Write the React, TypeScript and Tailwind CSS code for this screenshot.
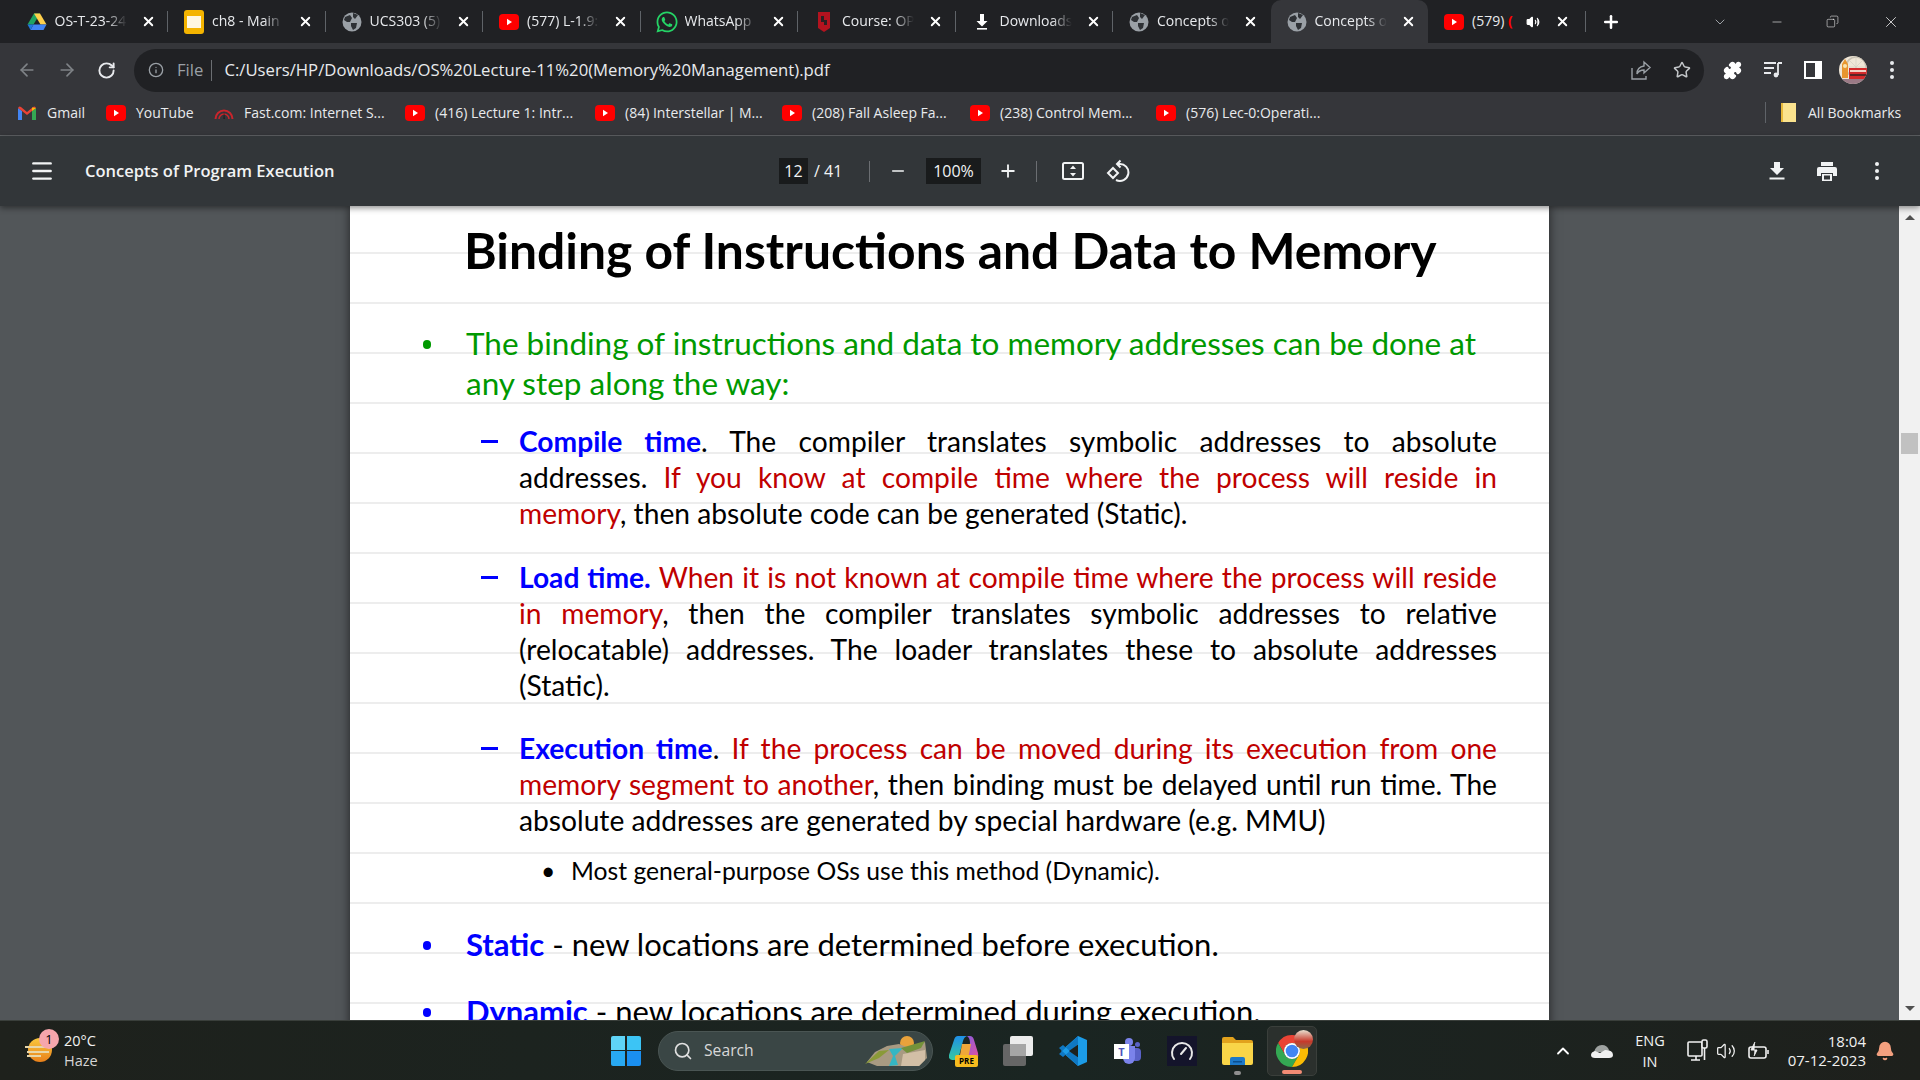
import React from 'react';
import { ArrowLeft, ArrowRight, RotateCw, Info, Star, Puzzle, Menu, Minus, Plus, X, ChevronDown, ChevronUp, Search, Volume2, Bell, Copy } from 'lucide-react';
import { FaWhatsapp } from 'react-icons/fa';

const ui = 'font-["Open_Sans",sans-serif]';

const YtIcon = ({ size = 20 }: { size?: number }) => (
  <svg width={size} height={size} viewBox="0 0 20 20" className="shrink-0">
    <rect x="0" y="2" width="20" height="16" rx="4" fill="#ff0000" />
    <path d="M8 6.8 L13 10 L8 13.2 Z" fill="#fff" />
  </svg>
);

const GlobeIcon = () => (
  <svg width="20" height="20" viewBox="0 0 20 20" className="shrink-0">
    <circle cx="10" cy="10" r="9.5" fill="#9aa0a6" />
    <path d="M3 5 L8 3 L10 6 L8 10 L5 10 L2 8 Z M11 1 L16 3 L13 7 L11 5 Z M9 11 L15 11 L14 16 L11 18 L9 14 Z" fill="#2e3135" />
  </svg>
);

const DriveIcon = () => (
  <svg width="20" height="20" viewBox="0 0 20 20" className="shrink-0">
    <path d="M7 1.5 L13 1.5 L6.5 12.5 L0.5 12.5 Z" fill="#1fa463" />
    <path d="M13 1.5 L19.5 12.5 L13.5 12.5 L7 1.5 Z" fill="#ffd04b" />
    <path d="M6.5 12.5 L19.5 12.5 L16.5 18 L3.5 18 Z" fill="#4285f4" />
    <path d="M0.5 12.5 L6.5 12.5 L3.5 18 Z" fill="#1f7ae0" />
  </svg>
);

const SlidesIcon = () => (
  <div className="w-[20px] h-[24px] shrink-0 bg-[#f4b400] rounded-[3px] flex items-center justify-center">
    <div className="w-[14px] h-[12px] bg-[#fff7e0]" />
  </div>
);

const CourseIcon = () => (
  <svg width="16" height="22" viewBox="0 0 16 22" className="shrink-0">
    <path d="M2 1 H14 V17 L8 21 L2 17 Z" fill="#b3131f" />
    <path d="M5 5 H8 V9 H11 V14 H8 V11 H5 Z" fill="#2b2022" />
  </svg>
);

const DownloadGlyph = () => (
  <svg width="20" height="20" viewBox="0 0 20 20" className="shrink-0">
    <path d="M8 2 H12 V9 H15.5 L10 14.5 L4.5 9 H8 Z" fill="#fff" />
    <rect x="5" y="16" width="10" height="1.6" fill="#fff" />
  </svg>
);

const Tab = ({
  icon,
  label,
  active,
  audio,
  sep = true,
}: {
  icon: React.ReactNode;
  label: React.ReactNode;
  active?: boolean;
  audio?: boolean;
  sep?: boolean;
}) => (
  <div className={`relative w-[157.5px] h-[43px] flex items-center pl-[15px] shrink-0 ${active ? 'bg-[#35363a] rounded-t-[10px]' : ''}`}>
    <div className="w-[22px] shrink-0 flex justify-center">{icon}</div>
    <div className={`ml-[7px] pb-[2px] overflow-hidden whitespace-nowrap text-[14px] text-[#e8eaed] ${audio ? 'w-[48px]' : 'w-[72px] [mask-image:linear-gradient(to_right,black_72%,transparent)]'}`}>
      {label}
    </div>
    {audio && <Volume2 size={14} fill="#fff" className="ml-[6px] text-white shrink-0" />}
    <X size={15} strokeWidth={3} className={`text-white shrink-0 ${audio ? 'ml-[15px]' : 'ml-[14px]'}`} />
    {sep && <div className="absolute right-0 top-[11px] h-[21px] w-px bg-[#5f6368]" />}
  </div>
);

const GmailIcon = () => (
  <svg width="18" height="14" viewBox="0 0 18 14" className="shrink-0">
    <path d="M0 2 L0 14 L4 14 L4 5 Z" fill="#4285f4" />
    <path d="M18 2 L18 14 L14 14 L14 5 Z" fill="#34a853" />
    <path d="M0 2 Q1 -0.5 3 1 L9 6 L15 1 Q17 -0.5 18 2 L14 5 L9 9 L4 5 Z" fill="#ea4335" />
    <path d="M14 1.5 L18 2 L14 5 Z" fill="#fbbc04" />
  </svg>
);

const FastIcon = () => (
  <svg width="20" height="16" viewBox="0 0 20 16" className="shrink-0">
    <path d="M1.5 14 A8.5 8.5 0 0 1 18.5 14" fill="none" stroke="#c9252c" strokeWidth="2" />
    <path d="M5 14 A5 5 0 0 1 15 14" fill="none" stroke="#c9252c" strokeWidth="1.5" />
    <path d="M9.6 14 L10 6 L10.6 14 Z" fill="#111" />
  </svg>
);

const Bookmark = ({ icon, label, width }: { icon: React.ReactNode; label: string; width: number }) => (
  <div className="flex items-center shrink-0 h-full" style={{ width }}>
    <div className="w-[20px] flex justify-center shrink-0">{icon}</div>
    <span className="ml-[10px] text-[14px] text-[#e8eaed] whitespace-nowrap">{label}</span>
  </div>
);

const ChromeLogo = () => (
  <svg width="32" height="32" viewBox="0 0 32 32">
    <path d="M16 8 H29.86 A16 16 0 0 0 2.14 8 L9.07 20 A8 8 0 0 1 16 8 Z" fill="#ea4335" />
    <path d="M9.07 20 L2.14 8 A16 16 0 0 0 16 32 L22.93 20 A8 8 0 0 1 9.07 20 Z" fill="#34a853" />
    <path d="M22.93 20 L16 32 A16 16 0 0 0 29.86 8 H16 A8 8 0 0 1 22.93 20 Z" fill="#fbbc04" />
    <circle cx="16" cy="16" r="8" fill="#fff" />
    <circle cx="16" cy="16" r="6.3" fill="#4285f4" />
  </svg>
);

const Avatar = () => (
  <svg width="28" height="28" viewBox="0 0 28 28" className="shrink-0">
    <clipPath id="av"><circle cx="14" cy="14" r="14" /></clipPath>
    <g clipPath="url(#av)">
      <rect width="28" height="28" fill="#efe6d6" />
      <circle cx="17" cy="11" r="10" fill="none" stroke="#c9c2b4" strokeWidth="1.6" />
      <path d="M17 1 V21 M7 11 H27 M10 4 L24 18 M24 4 L10 18" stroke="#d6cfc0" strokeWidth="0.7" />
      <path d="M3 8 L6 3 L9 8 V22 H3 Z" fill="#e8962f" />
      <circle cx="6" cy="10" r="2" fill="#f7e3b0" />
      <rect x="10" y="12" width="18" height="11" fill="#d42a2a" />
      <rect x="11" y="14" width="16" height="2" fill="#f3d2c4" />
      <rect x="11" y="18" width="16" height="2" fill="#5a2525" />
      <rect x="0" y="23" width="28" height="5" fill="#9a7a86" />
    </g>
  </svg>
);

const Sep = () => <div className="w-px h-[21px] bg-[#6b6e72] shrink-0" />;

const Blue = ({ children }: { children: React.ReactNode }) => <span className="text-[#0000ff] font-bold">{children}</span>;
const Red = ({ children }: { children: React.ReactNode }) => <span className="text-[#c00000]">{children}</span>;

// one justified line of the slide, stretched out to the right margin
const J = ({ children }: { children: React.ReactNode }) => (
  <div className="h-[36px] leading-[36px] text-justify [text-align-last:justify] whitespace-nowrap">{children}</div>
);
const L = ({ children }: { children: React.ReactNode }) => <div className="h-[36px] leading-[36px] whitespace-nowrap">{children}</div>;

const SubItem = ({ className, children }: { className: string; children: React.ReactNode }) => (
  <div className={`flex text-[28.2px] text-black ${className}`}>
    <div className="w-[48px] pl-[10px] shrink-0 flex items-start pt-[17px]">
      <div className="w-[17px] h-[3px] bg-[#0000ff]" />
    </div>
    <div className="w-[978px]">{children}</div>
  </div>
);

const Dot = ({ color }: { color: string }) => (
  <div className="w-[44px] shrink-0 pl-[2px] pt-[17px]">
    <div className={`w-[8px] h-[9px] rounded-full ${color}`} />
  </div>
);

const Slide = () => (
  <div className='w-[1199px] shrink-0 h-[900px] bg-white shadow-[0_0_10px_rgba(0,0,0,0.6)] bg-[repeating-linear-gradient(to_bottom,transparent_0,transparent_46px,#ededed_46px,#ededed_48px,transparent_48px,transparent_50px)] font-["Lato",sans-serif] pt-[14px]'>
    <div className="h-[60px] leading-[60px] pl-[114px] text-[49.8px] font-bold text-black whitespace-nowrap">
      Binding of Instructions and Data to Memory
    </div>
    <div className="flex mt-[43px] pl-[71px] text-[#009900] text-[31.5px] leading-[40px]">
      <Dot color="bg-[#009900]" />
      <div className="whitespace-nowrap pl-[1px]">
        <div>The binding of instructions and data to memory addresses can be done at</div>
        <div>any step along the way:</div>
      </div>
    </div>
    <SubItem className="mt-[20px] pl-[121px]">
      <J><Blue>Compile time</Blue>. The compiler translates symbolic addresses to absolute</J>
      <J>addresses. <Red>If you know at compile time where the process will reside in</Red></J>
      <L><Red>memory</Red>, then absolute code can be generated (Static).</L>
    </SubItem>
    <SubItem className="mt-[28px] pl-[121px]">
      <J><Blue>Load time.</Blue> <Red>When it is not known at compile time where the process will reside</Red></J>
      <J><Red>in memory</Red>, then the compiler translates symbolic addresses to relative</J>
      <J>(relocatable) addresses. The loader translates these to absolute addresses</J>
      <L>(Static).</L>
    </SubItem>
    <SubItem className="mt-[27px] pl-[121px]">
      <J><Blue>Execution time</Blue>. <Red>If the process can be moved during its execution from one</Red></J>
      <J><Red>memory segment to another</Red>, then binding must be delayed until run time. The</J>
      <L>absolute addresses are generated by special hardware (e.g. MMU)</L>
    </SubItem>
    <div className="flex mt-[17px] pl-[191px] text-[24.7px] leading-[32px] text-black whitespace-nowrap">
      <div className="w-[30px] shrink-0">•</div>
      <div>Most general-purpose OSs use this method (Dynamic).</div>
    </div>
    <div className="flex mt-[37px] pl-[71px] text-[31px] leading-[40px] text-black whitespace-nowrap">
      <Dot color="bg-[#0000ff]" />
      <div className="pl-[1px]"><Blue>Static</Blue> - new locations are determined before execution.</div>
    </div>
    <div className="flex mt-[27px] pl-[71px] text-[31px] leading-[40px] text-black whitespace-nowrap">
      <Dot color="bg-[#0000ff]" />
      <div className="pl-[1px]"><Blue>Dynamic</Blue> - new locations are determined during execution.</div>
    </div>
  </div>
);

const WindowsLogo = () => (
  <div className="grid grid-cols-2 gap-[1.5px] w-[30px] h-[30px] shrink-0">
    <div className="bg-[#5fd4f7] rounded-tl-[2px]" />
    <div className="bg-[#3cc4f5] rounded-tr-[2px]" />
    <div className="bg-[#28a9f2] rounded-bl-[2px]" />
    <div className="bg-[#1a8ff0] rounded-br-[2px]" />
  </div>
);

const SearchArt = () => (
  <svg width="64" height="34" viewBox="0 0 64 34" className="shrink-0">
    <circle cx="42" cy="9" r="7" fill="#e9a23b" />
    <path d="M2 28 L10 18 L22 12 L34 10 L44 14 L60 8 L62 24 L54 32 L12 32 Z" fill="#a89a82" />
    <path d="M24 15 L38 14 L30 22 L33 31 L24 32 L28 22 Z" fill="#34b6c4" />
    <path d="M36 14 L60 7 L56 14 L42 19 Z" fill="#74923a" />
    <path d="M0 30 L14 17 L24 16 L14 24 Z" fill="#8a9a38" />
    <path d="M38 20 L60 16 L60 26 L54 32 L36 32 Z" fill="#d2bfa6" />
  </svg>
);

const CopilotIcon = () => (
  <div className="relative w-[30px] h-[32px] shrink-0">
    <svg width="30" height="26" viewBox="0 0 30 26">
      <defs>
        <linearGradient id="cpa" x1="0" y1="0" x2="0" y2="1"><stop offset="0" stopColor="#1f8fe8" /><stop offset="1" stopColor="#36c9a0" /></linearGradient>
        <linearGradient id="cpb" x1="0" y1="0" x2="1" y2="1"><stop offset="0" stopColor="#7a5de8" /><stop offset="1" stopColor="#e8509a" /></linearGradient>
      </defs>
      <path d="M9 1 H18 Q15 2 14 6 L10 21 Q9 25 5 25 H3 Q-1 24 0 20 L5 5 Q6 1 9 1 Z" fill="url(#cpa)" />
      <path d="M18 1 H21 Q24 1 25 5 L29 18 Q30 24 26 25 H14 Q18 23 19 19 L21 8 Q21 3 18 1 Z" fill="url(#cpb)" />
      <path d="M13 9 H22 L20 19 Q19 24 14 25 H7 Q10 24 11 20 Z" fill="#f0a83a" />
    </svg>
    <div className={`absolute left-[6px] top-[20px] w-[23px] h-[12px] bg-[#f7bb1e] rounded-[2px] text-[8px] leading-[12px] font-bold text-black text-center ${ui}`}>PRE</div>
  </div>
);

const VsCodeIcon = () => (
  <svg width="30" height="30" viewBox="0 0 30 30" className="shrink-0">
    <path d="M21 0 L30 4 V26 L21 30 L4 15 Z" fill="#1c9ce8" />
    <path d="M21 0 V8 L6 21 L2 18 Z M21 30 V22 L6 9 L2 12 Z" fill="#0f78c4" />
    <path d="M21 8.5 L12 15 L21 21.5 Z" fill="#1c211f" />
  </svg>
);

const TeamsIcon = () => (
  <div className="relative w-[27px] h-[26px] shrink-0">
    <div className="absolute right-0 top-[10px] w-[8px] h-[13px] bg-[#5a62c8] rounded-r-[4px] rounded-bl-[2px]" />
    <div className="absolute right-[6px] top-[8px] w-[12px] h-[18px] bg-[#7b83eb] rounded-b-[6px]" />
    <div className="absolute right-[1px] top-[4px] w-[5px] h-[5px] bg-[#5a62c8] rounded-full" />
    <div className="absolute left-[11px] top-0 w-[8px] h-[8px] bg-[#7b83eb] rounded-full" />
    <div className={`absolute left-0 top-[6px] w-[15px] h-[15px] bg-white text-[#4b53bc] text-[11px] leading-[15px] font-bold text-center ${ui}`}>T</div>
  </div>
);

const SpeedIcon = () => (
  <div className="w-[30px] h-[30px] bg-[#14142b] flex items-center justify-center shrink-0">
    <svg width="24" height="22" viewBox="0 0 24 22" fill="none" stroke="#e8e8e8" strokeWidth="2" strokeLinecap="round">
      <path d="M4 19 A10 10 0 1 1 20 19" />
      <path d="M11 14 L16 8" />
    </svg>
  </div>
);

const FolderIcon = () => (
  <svg width="31" height="28" viewBox="0 0 31 28" className="shrink-0">
    <path d="M0 2 Q0 0 2 0 H11 L14 3 H29 Q31 3 31 5 V10 H0 Z" fill="#e2a21c" />
    <path d="M0 6 H31 V26 Q31 28 29 28 H2 Q0 28 0 26 Z" fill="#f9d548" />
    <path d="M8 28 V22 Q8 20 10 20 H21 Q23 20 23 22 V28 Z" fill="#1d79c9" />
    <rect x="11" y="24" width="9" height="1.5" fill="#0b4f8f" />
  </svg>
);

const OneDrive = () => (
  <svg width="22" height="14" viewBox="0 0 22 14" className="shrink-0">
    <path d="M3 8 Q5 1 11 1 Q16 1 18 6 L12 8 Z" fill="#9ea2a0" />
    <path d="M4 14 Q0 14 0 11 Q0 8 4 7 L9 9 L14 6 Q22 6 22 11 Q22 14 18 14 Z" fill="#f0f0f0" />
  </svg>
);

const App = () => (
  <div className={`w-[1920px] h-[1080px] flex flex-col overflow-hidden bg-[#525659] ${ui}`}>
    {/* tab strip */}
    <div className="h-[43px] bg-[#202124] flex items-center pl-[10.5px] shrink-0 relative">
      <Tab icon={<DriveIcon />} label="OS-T-23-24" />
      <Tab icon={<SlidesIcon />} label="ch8 - Main Memory" />
      <Tab icon={<GlobeIcon />} label="UCS303 (5) - Y" />
      <Tab icon={<YtIcon />} label="(577) L-1.9: Pro" />
      <Tab icon={<FaWhatsapp size={24} className="text-[#25d366]" />} label="WhatsApp" />
      <Tab icon={<CourseIcon />} label="Course: OPERAT" />
      <Tab icon={<DownloadGlyph />} label="Downloads" />
      <Tab icon={<GlobeIcon />} label="Concepts of Pr" sep={false} />
      <Tab icon={<GlobeIcon />} label="Concepts of Pr" active sep={false} />
      <Tab icon={<YtIcon />} label={<>(579) <span className="text-[#ff0000] font-bold">(</span></>} audio />
      <Plus size={20} strokeWidth={3} className="text-white ml-[15px] shrink-0" />
      <ChevronDown size={16} strokeWidth={1.2} className="text-[#bdc1c6] ml-[91px] shrink-0" />
      <Minus size={14} strokeWidth={1} className="text-white ml-[42px] shrink-0" />
      <Copy size={13} strokeWidth={1} className="text-white ml-[42px] shrink-0 -scale-x-100" />
      <X size={18} strokeWidth={1} className="text-white ml-[43px] shrink-0" />
    </div>

    {/* address row */}
    <div className="h-[54px] bg-[#35363a] flex items-center shrink-0">
      <ArrowLeft size={20} className="text-[#7f8387] ml-[17px] shrink-0" />
      <ArrowRight size={20} className="text-[#7f8387] ml-[20px] shrink-0" />
      <RotateCw size={19} strokeWidth={2.4} className="text-[#e8eaed] ml-[20px] shrink-0" />
      <div className="ml-[18px] w-[1570px] h-[43px] bg-[#202124] rounded-full flex items-center shrink-0">
        <Info size={16} className="text-[#9aa0a6] ml-[14px] shrink-0" />
        <span className="ml-[13px] text-[16.7px] text-[#9aa0a6]">File</span>
        <div className="ml-[8px] w-px h-[21px] bg-[#6b6e72]" />
        <span className="ml-[12px] text-[16.7px] text-[#e8eaed] whitespace-nowrap">C:/Users/HP/Downloads/OS%20Lecture-11%20(Memory%20Management).pdf</span>
        <svg width="22" height="22" viewBox="0 0 22 22" className="ml-auto shrink-0" fill="none" stroke="#9aa0a6" strokeWidth="1.4">
          <path d="M2 9 V20 H16 V17" />
          <path d="M7 15 Q7 8 14 7 V3 L20 8.5 L14 14 V11 Q9 11 7 15 Z" />
        </svg>
        <Star size={18} strokeWidth={2} className="text-[#c4c7ca] ml-[21px] mr-[13px] shrink-0" />
      </div>
      <Puzzle size={19} fill="#fff" className="text-white ml-[19px] shrink-0" />
      <svg width="20" height="18" viewBox="0 0 20 18" className="ml-[21px] shrink-0">
        <path d="M1 2 H13 M1 7 H11 M1 12 H8" stroke="#e8eaed" strokeWidth="1.8" />
        <path d="M15 2 H19 M15 2 V14" stroke="#e8eaed" strokeWidth="1.8" fill="none" />
        <circle cx="13" cy="14" r="2.4" fill="#e8eaed" />
      </svg>
      <div className="ml-[21px] w-[18px] h-[18px] bg-white flex justify-start shrink-0 pl-[2px] py-[2px]">
        <div className="w-[9px] h-full bg-[#35363a]" />
      </div>
      <div className="ml-[17px]"><Avatar /></div>
      <div className="ml-[23px] flex flex-col gap-[3px] shrink-0">
        <div className="w-[4px] h-[4px] rounded-full bg-[#e8eaed]" />
        <div className="w-[4px] h-[4px] rounded-full bg-[#e8eaed]" />
        <div className="w-[4px] h-[4px] rounded-full bg-[#e8eaed]" />
      </div>
    </div>

    {/* bookmarks bar */}
    <div className="h-[39px] bg-[#35363a] border-b border-[#5f6265] flex items-center shrink-0 pl-[18px] pb-[7px]">
      <div className="flex items-center h-full w-[88px] shrink-0">
        <GmailIcon />
        <span className="ml-[11px] text-[14px] text-[#e8eaed]">Gmail</span>
      </div>
      <Bookmark icon={<YtIcon />} label="YouTube" width={108} />
      <Bookmark icon={<FastIcon />} label="Fast.com: Internet S..." width={191} />
      <Bookmark icon={<YtIcon />} label="(416) Lecture 1: Intr..." width={190} />
      <Bookmark icon={<YtIcon />} label="(84) Interstellar | M..." width={187} />
      <Bookmark icon={<YtIcon />} label="(208) Fall Asleep Fa..." width={188} />
      <Bookmark icon={<YtIcon />} label="(238) Control Mem..." width={186} />
      <Bookmark icon={<YtIcon />} label="(576) Lec-0:Operati..." width={609} />
      <div className="w-px h-[21px] bg-[#5f6368] shrink-0" />
      <div className="ml-[15px] w-[15px] h-[19px] bg-[#fbe38e] border-l-[2px] border-[#e8b93a] shrink-0" />
      <span className="ml-[12px] text-[14px] text-[#e8eaed] whitespace-nowrap">All Bookmarks</span>
    </div>

    {/* pdf toolbar */}
    <div className="h-[70px] bg-[#323639] flex items-center shrink-0 z-10 shadow-[0_2px_6px_rgba(0,0,0,0.45)]">
      <Menu size={26} strokeWidth={2.2} className="text-[#f1f3f4] ml-[29px] shrink-0" />
      <div className="ml-[30px] w-[694px] shrink-0 text-[16.5px] font-semibold text-[#f1f3f4] whitespace-nowrap">Concepts of Program Execution</div>
      <div className="w-[29px] h-[26px] bg-[#191b1c] text-[#f1f3f4] text-[16px] leading-[26px] text-center shrink-0">12</div>
      <span className="ml-[6px] w-[55px] text-[16px] text-[#f1f3f4] shrink-0">/ 41</span>
      <Sep />
      <Minus size={18} strokeWidth={2.2} className="text-[#f1f3f4] ml-[19px] shrink-0" />
      <div className="ml-[19px] w-[55px] h-[26px] bg-[#191b1c] text-[#f1f3f4] text-[16px] leading-[26px] text-center shrink-0">100%</div>
      <Plus size={20} strokeWidth={2.2} className="text-[#f1f3f4] ml-[17px] shrink-0" />
      <div className="ml-[18px]"><Sep /></div>
      <svg width="22" height="18" viewBox="0 0 22 18" className="ml-[25px] shrink-0" fill="none">
        <rect x="1" y="1" width="20" height="16" rx="1.5" stroke="#f1f3f4" strokeWidth="2" />
        <path d="M11 3.5 L14 7 H8 Z M11 14.5 L14 11 H8 Z" fill="#f1f3f4" />
      </svg>
      <svg width="24" height="24" viewBox="0 0 24 24" className="ml-[22px] shrink-0" fill="none" stroke="#f1f3f4" strokeWidth="2">
        <path d="M11 5 H13 A8.5 8.5 0 1 1 10 21" />
        <path d="M14.5 1.5 L11 5 L14.5 8.5" />
        <path d="M7 9 L12 14 L7 19 L2 14 Z" />
      </svg>
      <svg width="16" height="18" viewBox="0 0 16 18" className="ml-[639px] shrink-0" fill="#f1f3f4">
        <path d="M5 0 H11 V6 H15 L8 13 L1 6 H5 Z" />
        <rect x="0.5" y="15.5" width="15" height="2" />
      </svg>
      <svg width="20" height="19" viewBox="0 0 20 19" className="ml-[32px] shrink-0" fill="#f1f3f4">
        <path d="M4 0 H16 V4 H4 Z" />
        <path d="M2 5 H18 Q20 5 20 7 V14 H16 V11 H4 V14 H0 V7 Q0 5 2 5 Z" />
        <path d="M5 12 H15 V19 H5 Z M7 13.5 V17.5 H13 V13.5 Z" fillRule="evenodd" />
      </svg>
      <div className="ml-[38px] flex flex-col gap-[3px] shrink-0">
        <div className="w-[4px] h-[4px] rounded-full bg-[#f1f3f4]" />
        <div className="w-[4px] h-[4px] rounded-full bg-[#f1f3f4]" />
        <div className="w-[4px] h-[4px] rounded-full bg-[#f1f3f4]" />
      </div>
    </div>

    {/* viewer */}
    <div className="flex-1 min-h-0 flex overflow-hidden">
      <div className="flex-1 flex justify-center overflow-hidden">
        <Slide />
      </div>
      <div className="w-[21px] bg-[#f1f1f1] shrink-0 flex flex-col items-center">
        <div className="mt-[9px] w-0 h-0 border-x-[5px] border-x-transparent border-b-[5px] border-b-[#505050]" />
        <div className="mt-[213px] w-[17px] h-[21px] bg-[#c1c1c1]" />
        <div className="mt-auto mb-[9px] w-0 h-0 border-x-[5px] border-x-transparent border-t-[5px] border-t-[#505050]" />
      </div>
    </div>

    {/* windows taskbar */}
    <div className="h-[60px] bg-[linear-gradient(to_right,#1e211c,#1a2522_55%,#1e201c)] border-t border-[#3a3f3b] flex items-center shrink-0 relative">
      <div className="relative ml-[25px] w-[26px] h-[36px] shrink-0">
        <div className="absolute left-[3px] top-[5px] w-[24px] h-[24px] rounded-full bg-[linear-gradient(to_bottom,#f9c83d,#e8801a)]" />
        <div className="absolute left-0 top-[13px] w-[22px] h-[2px] bg-[#e8d6a8]" />
        <div className="absolute left-[2px] top-[18px] w-[22px] h-[2px] bg-[#e8d6a8]" />
        <div className="absolute left-[2px] top-[22px] w-[14px] h-[2px] bg-[#e8d6a8]" />
        <div className="absolute left-[14px] top-[-4px] w-[20px] h-[20px] rounded-full bg-[#f6a6ac] text-black text-[13px] leading-[20px] text-center">1</div>
      </div>
      <div className="ml-[13px] w-[60px] shrink-0 text-[14.5px] text-[#f1f1f1] leading-[20px]">
        <div>20°C</div>
        <div className="text-[#d5d5d5]">Haze</div>
      </div>
      <div className="ml-[487px]"><WindowsLogo /></div>
      <div className="ml-[17px] w-[275px] h-[40px] rounded-full bg-[#3a4645] border border-[#4a5553] flex items-center shrink-0">
        <Search size={20} strokeWidth={2} className="ml-[14px] text-[#e0e0e0] shrink-0" />
        <span className="ml-[11px] text-[15.7px] text-[#d8d8d8]">Search</span>
        <div className="ml-auto mr-[3px]"><SearchArt /></div>
      </div>
      <div className="ml-[16px]"><CopilotIcon /></div>
      <div className="relative ml-[24px] w-[30px] h-[30px] shrink-0">
        <div className="absolute left-0 top-[8px] w-[23px] h-[22px] bg-[#666] rounded-[2px]" />
        <div className="absolute left-[7px] top-0 w-[23px] h-[20px] bg-[#ececec] rounded-[2px]" />
        <div className="absolute left-[7px] top-[8px] w-[16px] h-[12px] bg-[#a6a6a6]" />
      </div>
      <div className="ml-[24px]"><VsCodeIcon /></div>
      <div className="ml-[27px]"><TeamsIcon /></div>
      <div className="ml-[26px]"><SpeedIcon /></div>
      <div className="ml-[25px] flex flex-col items-center relative">
        <FolderIcon />
        <div className="absolute bottom-[-10px] w-[7px] h-[4px] rounded-full bg-[#8f8f8f]" />
      </div>
      <div className="ml-[14px] w-[50px] h-[50px] rounded-[5px] bg-[#2b302d] border border-[#3a3f3b] flex items-center justify-center relative shrink-0">
        <ChromeLogo />
        <div className="absolute right-[3px] top-[3px] w-[19px] h-[19px] rounded-full bg-[linear-gradient(to_bottom,#e8e0d0,#c8392b_60%,#8a6a4a)]" />
        <div className="absolute bottom-[1px] w-[20px] h-[4px] rounded-full bg-[#f28b74]" />
      </div>
      <ChevronUp size={20} strokeWidth={2.2} className="ml-[236px] text-white shrink-0" />
      <div className="ml-[18px]"><OneDrive /></div>
      <div className="ml-[19px] w-[36px] text-center text-[14.5px] leading-[21px] text-[#f1f1f1] shrink-0">
        <div>ENG</div>
        <div>IN</div>
      </div>
      <svg width="22" height="24" viewBox="0 0 22 24" className="ml-[19px] shrink-0" fill="none" stroke="#f1f1f1" strokeWidth="1.6">
        <rect x="1" y="3" width="14" height="14" rx="1" />
        <path d="M4 21 H13 M9 17 V21" />
        <rect x="15" y="1" width="5" height="8" rx="1.5" fill="#1e201c" />
        <path d="M17.5 9 V21" />
      </svg>
      <Volume2 size={20} strokeWidth={1.5} className="ml-[7px] text-[#f1f1f1] shrink-0" />
      <svg width="22" height="20" viewBox="0 0 22 20" className="ml-[12px] shrink-0" fill="none" stroke="#f1f1f1" strokeWidth="1.6">
        <rect x="1" y="6" width="17" height="11" rx="2" />
        <path d="M20 9 V13" />
        <path d="M7 1 L3 9 H9 L6 15" fill="#f1f1f1" strokeWidth="1" />
      </svg>
      <div className="ml-[1px] w-[95px] text-right text-[15px] leading-[19px] text-[#f1f1f1] shrink-0">
        <div>18:04</div>
        <div>07-12-2023</div>
      </div>
      <Bell size={20} fill="#f4a07f" className="ml-[9px] text-[#f4a07f] shrink-0" />
    </div>
  </div>
);

export default App;
